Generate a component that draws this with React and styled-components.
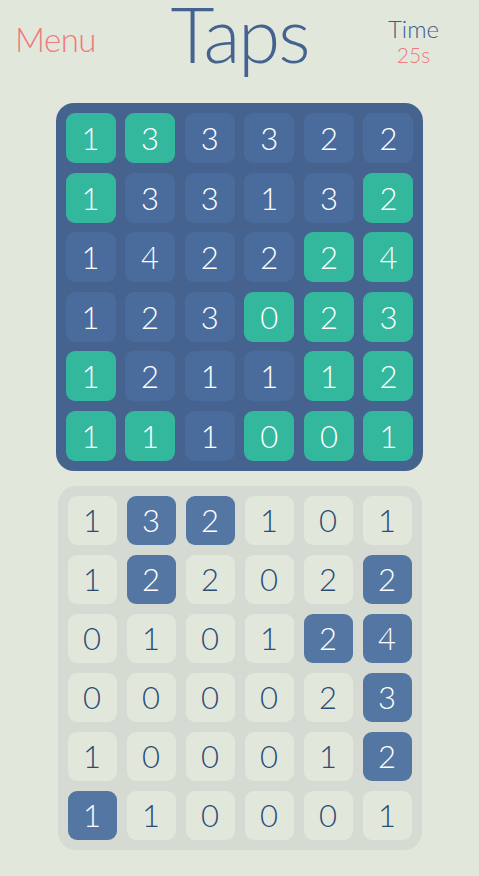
import React from 'react'
import styled, { createGlobalStyle } from 'styled-components'

const GlobalStyle = createGlobalStyle`
    html, body {
        margin: 0;
        padding: 0;
        background: #e2e7dc;
    }
    body {
        font-family: Lato, "Open Sans", sans-serif;
        font-weight: 300;
    }
`

const Page = styled.div`
    width: 479px;
    height: 876px;
    display: flex;
    flex-direction: column;
    align-items: center;
    background: #e2e7dc;
`

const Header = styled.div`
    width: 100%;
    height: 103px;
    display: grid;
    grid-template-columns: 1fr auto 1fr;
    align-items: start;
    box-sizing: border-box;
`

const Menu = styled.div`
    justify-self: start;
    padding: 19px 0 0 15px;
    font-size: 33px;
    color: #ee7a7c;
    letter-spacing: -0.5px;
`

const Title = styled.h1`
    margin: 0;
    font-size: 76px;
    font-weight: 300;
    line-height: 68px;
    color: #44638f;
    letter-spacing: -2px;
`

const TimeBox = styled.div`
    justify-self: end;
    padding: 16px 40px 0 0;
    text-align: center;
    line-height: 26px;
`

const TimeLabel = styled.div`
    font-size: 24px;
    color: #3a5d8e;
`

const TimeValue = styled.div`
    font-size: 21px;
    color: #ee7a7c;
`

const Board = styled.div`
    display: grid;
    grid-template-columns: repeat(6, ${p => p.$tile}px);
    grid-auto-rows: ${p => p.$tile}px;
    gap: ${p => p.$gap}px;
    padding: 10px;
    border-radius: 18px;
    background: ${p => (p.$light ? '#d5dbd2' : '#45638e')};
    margin-bottom: 15px;
`

const Tile = styled.div`
    display: flex;
    align-items: center;
    justify-content: center;
    border-radius: 9px;
    font-size: 31px;
    font-weight: 300;
    background: ${p => p.$bg};
    color: ${p => p.$fg};
`

const target = [
    '1g 3g 3 3 2 2',
    '1g 3 3 1 3 2g',
    '1 4 2 2 2g 4g',
    '1 2 3 0g 2g 3g',
    '1g 2 1 1 1g 2g',
    '1g 1g 1 0g 0g 1g',
]

const player = [
    '1 3b 2b 1 0 1',
    '1 2b 2 0 2 2b',
    '0 1 0 1 2b 4b',
    '0 0 0 0 2 3b',
    '1 0 0 0 1 2b',
    '1b 1 0 0 0 1',
]

const parse = rows => rows.flatMap(r => r.split(' ').map(c => ({ n: c[0], on: c.length > 1 })))

const App = () => {
    return (
        <Page>
            <GlobalStyle />
            <Header>
                <Menu>Menu</Menu>
                <Title>Taps</Title>
                <TimeBox>
                    <TimeLabel>Time</TimeLabel>
                    <TimeValue>25s</TimeValue>
                </TimeBox>
            </Header>
            <Board $tile={50} $gap={9.6}>
                {parse(target).map((c, i) => (
                    <Tile key={i} $bg={c.on ? '#33b89e' : '#4a6c9d'} $fg="#ffffff">
                        {c.n}
                    </Tile>
                ))}
            </Board>
            <Board $light $tile={49} $gap={10}>
                {parse(player).map((c, i) => (
                    <Tile key={i} $bg={c.on ? '#5376a3' : '#e2e7dc'} $fg={c.on ? '#ffffff' : '#2a4b76'}>
                        {c.n}
                    </Tile>
                ))}
            </Board>
        </Page>
    )
}

export default App
